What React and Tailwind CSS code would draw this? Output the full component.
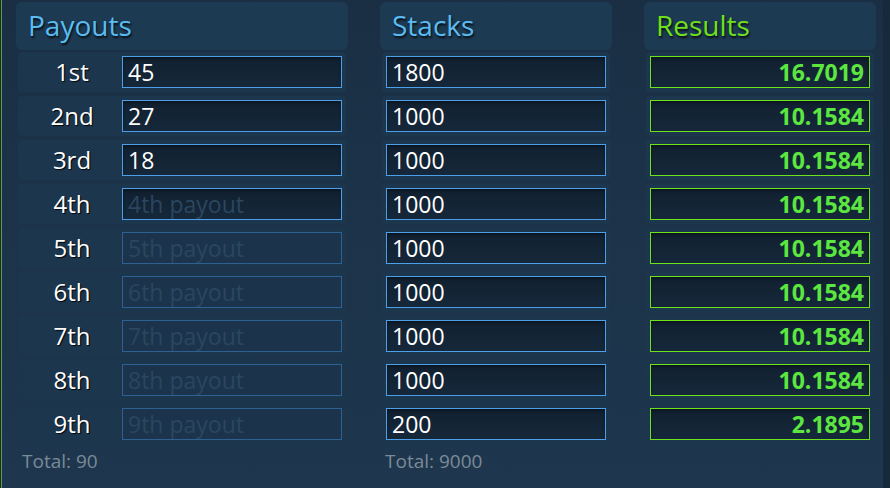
const payouts = ['45', '27', '18', '', '', '', '', '', ''];
const stacks = ['1800', '1000', '1000', '1000', '1000', '1000', '1000', '1000', '200'];
const results = ['16.7019', '10.1584', '10.1584', '10.1584', '10.1584', '10.1584', '10.1584', '10.1584', '2.1895'];
const places = ['1st', '2nd', '3rd', '4th', '5th', '6th', '7th', '8th', '9th'];

const font = { fontFamily: '"Open Sans", "Noto Sans", sans-serif' };

function Header({ title, color }) {
  return (
    <div className="h-[48px] rounded-md bg-[#1d3a53] flex items-center px-3 pb-[3px]">
      <span className={`text-[28px] leading-none ${color} [text-shadow:1px_2px_2px_rgba(0,0,0,0.75)]`}>{title}</span>
    </div>
  );
}

function Row({ children }) {
  return (
    <div className="mx-[2px] h-[40px] rounded-[4px] bg-[#1c364e] flex items-center p-[4px]">
      {children}
    </div>
  );
}

const inputBase = 'h-[32px] border px-[5px] text-[23px] leading-none outline-none';

export default function App() {
  return (
    <div className="w-[890px] h-[488px] bg-[#172a3c] overflow-hidden" style={font}>
      <div className="w-[882px] h-full ml-px border-l border-[#5f9e3a] bg-gradient-to-b from-[#1a2f44] to-[#1e374e] flex gap-8 pl-[14px] pt-[2px]">
        {/* Payouts */}
        <div className="w-[332px] flex flex-col">
          <Header title="Payouts" color="text-[#5bbcf2]" />
          <div className="flex flex-col gap-[4px] mt-[2px]">
            {places.map((p, i) => {
              const enabled = i < 4;
              return (
                <Row key={p}>
                  <div className="w-[100px] text-center text-white text-[24px] leading-none [text-shadow:1px_1px_1px_rgba(0,0,0,0.9)]">{p}</div>
                  <input
                    readOnly
                    disabled={!enabled}
                    value={payouts[i]}
                    placeholder={`${p} payout`}
                    className={`w-[220px] ${inputBase} text-white placeholder:text-[#2a4660] ${
                      enabled
                        ? 'border-[#4c9fe8] bg-gradient-to-b from-[#112030] to-[#15283a] shadow-[inset_0_2px_3px_rgba(0,0,0,0.35)]'
                        : 'border-[#2e6190] bg-[#1b344b]'
                    }`}
                  />
                </Row>
              );
            })}
          </div>
          <div className="mt-[8px] pl-[6px] text-[19px] leading-none text-[#7b8a97]">Total: 90</div>
        </div>

        {/* Stacks */}
        <div className="w-[232px] flex flex-col">
          <Header title="Stacks" color="text-[#5bbcf2]" />
          <div className="flex flex-col gap-[4px] mt-[2px]">
            {stacks.map((s, i) => (
              <Row key={i}>
                <input
                  readOnly
                  value={s}
                  className={`w-[220px] ${inputBase} text-white border-[#4c9fe8] bg-gradient-to-b from-[#112030] to-[#15283a] shadow-[inset_0_2px_3px_rgba(0,0,0,0.35)]`}
                />
              </Row>
            ))}
          </div>
          <div className="mt-[8px] pl-[5px] text-[19px] leading-none text-[#7b8a97]">Total: 9000</div>
        </div>

        {/* Results */}
        <div className="w-[232px] flex flex-col">
          <Header title="Results" color="text-[#6fe01c]" />
          <div className="flex flex-col gap-[4px] mt-[2px]">
            {results.map((r, i) => (
              <Row key={i}>
                <div className="w-[220px] h-[32px] border border-[#6ee31c] bg-gradient-to-b from-[#112030] to-[#15283a] shadow-[inset_0_2px_3px_rgba(0,0,0,0.35)] flex items-center justify-end px-[5px] text-[23px] font-bold leading-none text-[#5ce640]">
                  {r}
                </div>
              </Row>
            ))}
          </div>
        </div>
      </div>
    </div>
  );
}
